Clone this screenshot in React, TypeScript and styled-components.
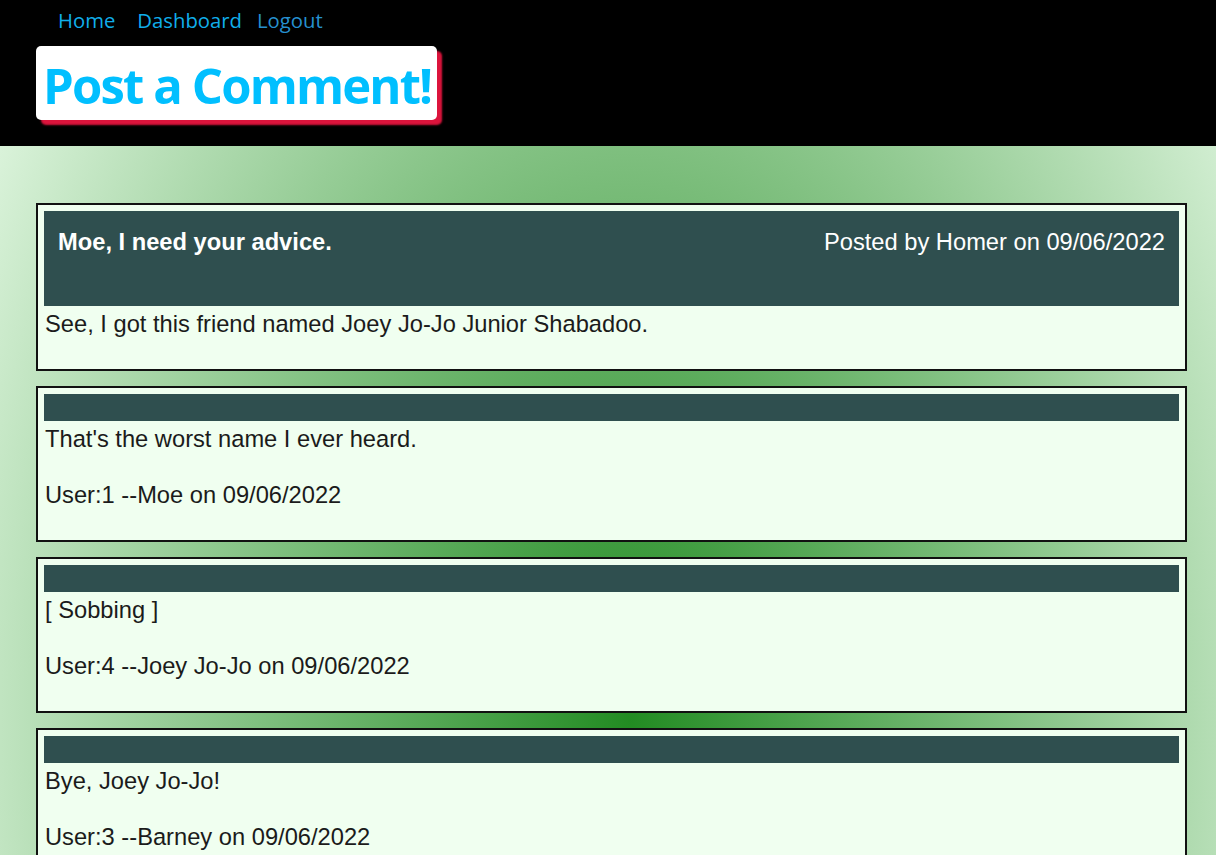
import styled, { createGlobalStyle } from "styled-components";

const GlobalStyle = createGlobalStyle`
  body {
    margin: 0;
    background-color: honeydew;
    font-family: "Liberation Sans", Arial, sans-serif;
  }
`;

const Header = styled.header`
  background-color: black;
  padding: 6px 0 26px 36px;
`;

const Nav = styled.nav`
  display: flex;
  align-items: center;
  height: 28px;
  padding-left: 22px;
  margin-bottom: 12px;
`;

const NavLink = styled.a<{ $dim?: boolean }>`
  font-family: "Open Sans", "Noto Sans", sans-serif;
  font-size: 20.3px;
  color: ${(p) => (p.$dim ? "#2690cf" : "#10aeea")};
  text-decoration: none;
  margin-right: ${(p) => (p.$dim ? "0" : "22px")};
  cursor: pointer;

  &:nth-child(2) {
    margin-right: 15px;
  }
`;

const TitleBox = styled.h1`
  display: inline-block;
  margin: 0;
  height: 74px;
  padding: 0 6px 0 7px;
  background-color: white;
  border-radius: 5px;
  box-shadow: 5px 5px 2px crimson;
  font-family: "Open Sans", "Noto Sans", sans-serif;
  font-size: 49px;
  font-weight: 700;
  line-height: 78px;
  letter-spacing: -1.85px;
  color: deepskyblue;
`;

const Main = styled.main`
  padding: 57px 29px 40px 36px;
  background-color: honeydew;
  background-image: radial-gradient(
    ellipse 820px 1270px at 630px 574px,
    forestgreen 0%,
    honeydew 100%
  );
`;

const Card = styled.article`
  border: 2px solid #111;
  background-color: honeydew;
  padding: 6px;
  margin-bottom: 15px;
  font-size: 23.7px;
  color: #1b1b1b;
`;

const CardBar = styled.div<{ $tall?: boolean }>`
  display: flex;
  justify-content: space-between;
  background-color: darkslategray;
  color: white;
  height: ${(p) => (p.$tall ? "95px" : "27px")};
  padding: ${(p) => (p.$tall ? "19px 14px 0" : "0")};
  line-height: 25px;
  box-sizing: border-box;
`;

const PostTitle = styled.span`
  font-weight: 700;
`;

const PostMeta = styled.span``;

const CardBody = styled.div`
  padding: 4px 0 25px 1px;
  line-height: 28px;
`;

const Line = styled.p`
  margin: 0;
  min-height: 28px;
`;

const comments = [
  { text: "That's the worst name I ever heard.", user: 1, name: "Moe" },
  { text: "[ Sobbing ]", user: 4, name: "Joey Jo-Jo" },
  { text: "Bye, Joey Jo-Jo!", user: 3, name: "Barney" },
];

export default function App() {
  return (
    <>
      <GlobalStyle />
      <Header>
        <Nav>
          <NavLink>Home</NavLink>
          <NavLink>Dashboard</NavLink>
          <NavLink $dim>Logout</NavLink>
        </Nav>
        <TitleBox>Post a Comment!</TitleBox>
      </Header>
      <Main>
        <Card>
          <CardBar $tall>
            <PostTitle>Moe, I need your advice.</PostTitle>
            <PostMeta>Posted by Homer on 09/06/2022</PostMeta>
          </CardBar>
          <CardBody>
            <Line>See, I got this friend named Joey Jo-Jo Junior Shabadoo.</Line>
          </CardBody>
        </Card>
        {comments.map((c) => (
          <Card key={c.user}>
            <CardBar />
            <CardBody>
              <Line>{c.text}</Line>
              <Line />
              <Line>
                User:{c.user} --{c.name} on 09/06/2022
              </Line>
            </CardBody>
          </Card>
        ))}
      </Main>
    </>
  );
}
